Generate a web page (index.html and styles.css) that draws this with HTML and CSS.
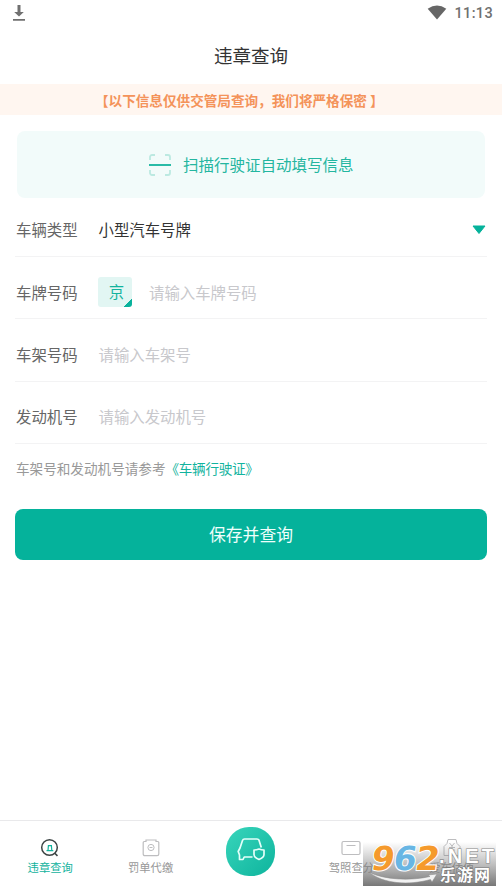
FILE: index.html
```html
<!DOCTYPE html>
<html lang="zh-CN">
<head>
<meta charset="utf-8">
<title>违章查询</title>
<link rel="stylesheet" href="styles.css">
</head>
<body>
<div class="status">
  <svg class="download" width="14" height="18" viewBox="0 0 14 18"><path d="M5.5 1h3v7h3.3L7 12.5 2.2 8h3.3zM1 15h12v1.8H1z" fill="#707070"/></svg>
  <svg class="wifi" width="20" height="15" viewBox="0 0 20 15"><path d="M.7 3.7Q10-2.5 19.3 3.7L10 14.5z" fill="#666"/></svg>
  <span class="clock">11:13</span>
</div>
<h1 class="title">违章查询</h1>
<div class="notice">【以下信息仅供交管局查询，我们将严格保密 】</div>
<main class="content">
  <div class="scan">
    <svg width="24" height="24" viewBox="0 0 24 24" fill="none"><path d="M2 7V4a2 2 0 0 1 2-2h3M17 2h3a2 2 0 0 1 2 2v3M22 17v3a2 2 0 0 1-2 2h-3M7 22H4a2 2 0 0 1-2-2v-3" stroke="#bce9e1" stroke-width="1.8"/><path d="M1 12h22" stroke="#14b49e" stroke-width="1.8"/></svg>
    <span>扫描行驶证自动填写信息</span>
  </div>
  <div class="row row-type"><label>车辆类型</label><span class="value">小型汽车号牌</span><svg class="caret" width="14" height="10" viewBox="0 0 14 10"><path d="M1 1h12L7 8.5z" fill="#05b29b" stroke="#05b29b" stroke-linejoin="round"/></svg></div>
  <div class="row"><label>车牌号码</label><span class="province">京</span><span class="hint">请输入车牌号码</span></div>
  <div class="row"><label>车架号码</label><span class="hint">请输入车架号</span></div>
  <div class="row"><label>发动机号</label><span class="hint">请输入发动机号</span></div>
  <p class="note">车架号和发动机号请参考<a>《车辆行驶证》</a></p>
  <div class="submit">保存并查询</div>
</main>
<nav class="tabs">
  <div class="tab active">
    <svg width="20" height="20" viewBox="0 0 20 20" fill="none"><circle cx="9.5" cy="9.5" r="7.8" stroke="#3c4444" stroke-width="1.5"/><path d="M14.5 15l3 2.8" stroke="#3c4444" stroke-width="1.6"/><path d="M6.5 12.7h6.800M8 12.500l.4-4.800h3l.4 4.800" stroke="#12b39e" stroke-width="1.2"/></svg>
    <span>违章查询</span>
  </div>
  <div class="tab">
    <svg width="20" height="20" viewBox="0 0 20 20" fill="none" stroke="#bdbdbf"><path d="M5 2h10v1.500h1.800q1 0 1 1V16q0 1.700-1.700 1.700H3.900Q2.200 17.700 2.200 16V4.500q0-1 1-1H5z" stroke-width="1.200"/><circle cx="10" cy="9.500" r="3.100"/><path d="M8.500 9.500h3"/></svg>
    <span>罚单代缴</span>
  </div>
  <div class="center"><div class="fab">
    <svg width="30" height="28" viewBox="0 0 30 28" fill="none" stroke="#e4fffa" stroke-width="1.700" stroke-linejoin="round"><path d="M16.500 21H8.200L7 23.500H3.500V19L2.200 15.500 4 12l2.500-7.500Q7 3 8.500 3H21q1.500 0 2 1.200l2.300 7.300"/><path d="M18 14q2.500 0 5-1 2.500 1 5 1v4.500q0 3-5 5-5-2-5-5z"/></svg>
  </div></div>
  <div class="tab">
    <svg width="20" height="20" viewBox="0 0 20 20" fill="none" stroke="#bdbdbf"><rect x="1" y="3.500" width="18" height="13" rx="1.500" stroke-width="1.200"/><path d="M5.500 7.500h9"/></svg>
    <span>驾照查分</span>
  </div>
  <div class="tab">
    <svg width="20" height="20" viewBox="0 0 20 20" fill="none" stroke="#bdbdbf"><path d="M6 1.500h8l1 4 3 3v9H2v-9l3-3z"/><path d="M7.500 5l2.500 3 2.500-3M10 8v6M7 9.500h6M7 12h6"/></svg>
    <span>爱车估值</span>
  </div>
  <svg class="mark" width="133" height="44" viewBox="0 0 133 44">
    <defs><linearGradient id="shade" x2="0" y2="1"><stop stop-color="#777" stop-opacity="0"/><stop offset=".5" stop-color="#777" stop-opacity=".46"/><stop offset="1" stop-color="#6b6b6b" stop-opacity=".92"/></linearGradient></defs>
    <path d="M0 0h133v44H0z" fill="url(#shade)"/>
    <path d="M6 30C21 38 48 39 67 34.500l-2-1.500 9-1-5 8-1.500-2.500C46 43.500 20 42 6 30z" fill="#f2f2f2" stroke="#888" stroke-width=".5"/>
    <g class="digits" transform="translate(0 28) skewX(-9)"><text x="7" textLength="23" lengthAdjust="spacingAndGlyphs" fill="#f59a2c">9</text><text x="29" textLength="23" lengthAdjust="spacingAndGlyphs" fill="#68b6e4">6</text><text x="51" textLength="24" lengthAdjust="spacingAndGlyphs" fill="#f59a2c">2</text></g>
    <text class="net" x="76" y="21" textLength="55">.NET</text>
    <text class="site" x="77" y="39" textLength="50">乐游网</text>
  </svg>
</nav>
</body>
</html>
```
FILE: styles.css
```css
* { box-sizing: border-box; }
body { margin: 0; width: 502px; height: 892px; display: flex; flex-direction: column; overflow: hidden; background: #fff; font-family: "Noto Sans CJK SC", sans-serif; }
svg { display: block; flex: none; }
.status { height: 28px; padding: 4px 9px 0 12px; display: flex; align-items: flex-start; }
.wifi { margin: 1px 7px 0 auto; }
.clock { font: 500 14.5px/20px Roboto, sans-serif; color: #707070; letter-spacing: .35px; }
.title { height: 56px; margin: 0; font-size: 18.5px; font-weight: 400; line-height: 54px; text-align: center; color: #333; }
.notice { height: 31px; padding-left: 95px; background: #fff6f0; color: #f4935a; font-size: 13.6px; font-weight: 700; line-height: 32px; white-space: pre; }
.content { flex: 1; padding: 16px 15px 0; }
.scan { height: 67px; margin: 0 2px; padding-left: 131px; border-radius: 8px; background: #f2fbfa; display: flex; align-items: center; gap: 11px; color: #24b6a0; font-size: 15.5px; }
.scan span { margin-top: -2px; }
.row { height: 62.3px; padding: 8px 0 0 1px; border-bottom: 1px solid #f3f3f4; display: flex; align-items: center; font-size: 15.4px; line-height: 24px; }
.row-type { height: 59px; padding-top: 4px; }
.row label { width: 82.5px; color: #666; }
.value { color: #333; }
.caret { margin-left: auto; margin-right: 1px; margin-top: 2px; }
.province { width: 34px; height: 30px; margin-left: -.5px; margin-right: 17px; padding-left: 3px; border-radius: 3px; text-align: center; line-height: 29px; color: #12b39e; background: linear-gradient(135deg, transparent 50%, #08b29c 50%) right bottom / 10px 8px no-repeat, #e2f6f3; }
.hint { color: #c8c8cc; }
.note { height: 65.5px; margin: 0; padding: 14px 0 0 1px; font-size: 13.6px; line-height: 20px; color: #999; }
.note a { color: #12b39e; letter-spacing: -.3px; }
.submit { height: 51px; border-radius: 8px; background: #05b29b; color: #effffb; font-size: 16.8px; line-height: 51px; text-align: center; }
.tabs { position: relative; height: 72px; border-top: 1px solid #e9e9eb; display: grid; grid-template-columns: repeat(5, 1fr); }
.tab { display: flex; flex-direction: column; align-items: center; padding-top: 17px; font-size: 11.3px; line-height: 17px; color: #999; gap: 1px; }
.active { color: #12b39e; }
.center { padding-top: 6px; display: flex; justify-content: center; align-items: flex-start; }
.fab { width: 49px; height: 49px; padding-bottom: 3px; border-radius: 23px; display: flex; justify-content: center; align-items: center; background: linear-gradient(135deg, #38d5bb, #0eb49d); }
.mark { position: absolute; left: 363px; top: 21px; overflow: visible; }
.digits { font: 700 33px "DejaVu Sans", sans-serif; stroke: #fff; stroke-width: 2px; paint-order: stroke; }
.net { font: 700 20px "Liberation Sans", sans-serif; fill: #fff; stroke: #888; stroke-width: 1.2px; paint-order: stroke; }
.site { font: 700 16px "Noto Sans CJK SC", sans-serif; fill: #fff; stroke: #777; stroke-width: 1.2px; paint-order: stroke; }
```
